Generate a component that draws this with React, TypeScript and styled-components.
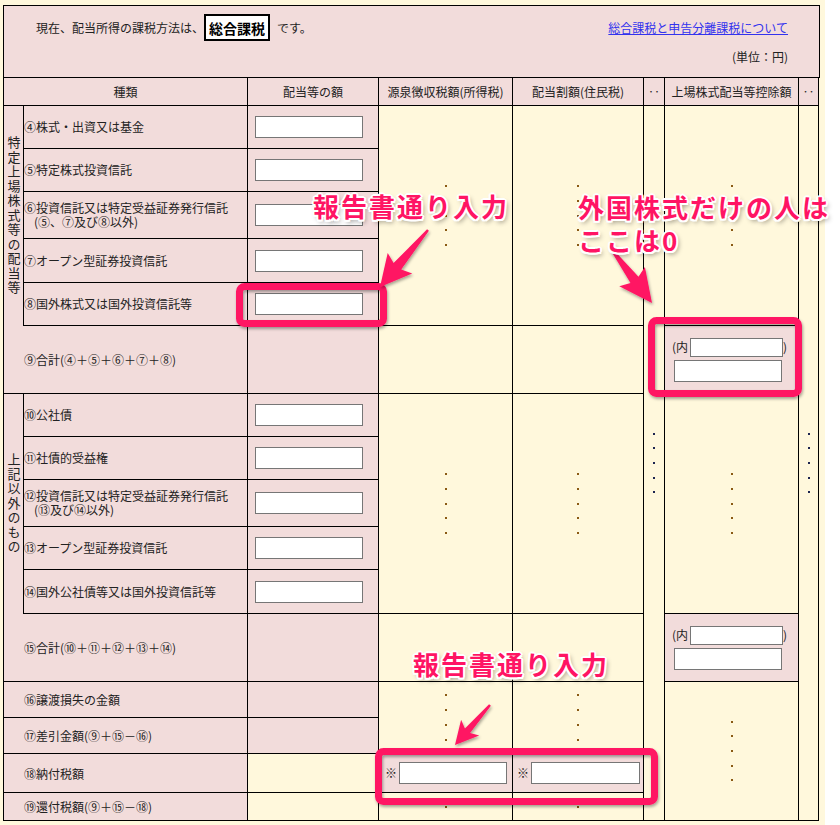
import React from "react";
import styled, { createGlobalStyle } from "styled-components";

const PINK = "#f2dcdb";
const CREAM = "#fff8dc";
const MARK = "#ff1464";

const GlobalStyle = createGlobalStyle`
  html, body {
    margin: 0;
    padding: 0;
    background: #fff;
  }
  body {
    font-family: "Noto Sans CJK JP", "Noto Sans", sans-serif;
  }
`;

const Page = styled.div`
  position: relative;
  width: 825px;
  height: 825px;
  box-sizing: border-box;
  padding: 5px 0 0 3px;
  background: ${CREAM};
  color: #222;
  font-size: 12px;
`;

const Form = styled.div`
  width: 816px;
  border-left: 1px solid #000;
  border-top: 1px solid #000;
`;

const TopSection = styled.div`
  box-sizing: border-box;
  height: 72px;
  display: flex;
  justify-content: space-between;
  padding: 8px 31px 0 32px;
  background: ${PINK};
  border-right: 1px solid #000;
  border-bottom: 1px solid #000;
`;

const Sentence = styled.div`
  display: flex;
  align-items: center;
  height: 27px;
  white-space: nowrap;
`;

const MethodBox = styled.span`
  display: inline-flex;
  align-items: center;
  box-sizing: border-box;
  height: 27px;
  padding: 0 3px;
  margin-right: 7px;
  border: 2px solid #000;
  background: #fff;
  color: #000;
  font-size: 14px;
  font-weight: bold;
`;

const Side = styled.div`
  display: flex;
  flex-direction: column;
  align-items: flex-end;
`;

const HelpLink = styled.a`
  line-height: 27px;
  color: #3333ee;
  text-decoration: underline;
`;

const Unit = styled.div`
  margin-top: 7px;
  line-height: 18px;
`;

const Grid = styled.div`
  display: grid;
  grid-template-columns: 20px 224px 131px 134px 131px 21px 134px 20px;
  grid-template-rows:
    28px 43px 43px 47px 44px 43px 68px 43px 43px 47px 43px 44px 68px
    36px 36px 39px 28px;
`;

type CellProps = {
  $col: number;
  $span?: number;
  $row: number;
  $rows?: number;
  $tone?: "pink" | "cream";
  $open?: boolean;
  $center?: boolean;
  $pad?: number;
};

const Cell = styled.div<CellProps>`
  grid-column: ${(p) => p.$col} / span ${(p) => p.$span ?? 1};
  grid-row: ${(p) => p.$row} / span ${(p) => p.$rows ?? 1};
  box-sizing: border-box;
  min-width: 0;
  display: flex;
  align-items: center;
  justify-content: ${(p) => (p.$center ? "center" : "flex-start")};
  padding-left: ${(p) => p.$pad ?? 0}px;
  border-right: 1px solid #000;
  border-bottom: ${(p) => (p.$open ? "none" : "1px solid #000")};
  background: ${(p) => (p.$tone === "cream" ? CREAM : PINK)};
  white-space: nowrap;
`;

const StackCell = styled(Cell)`
  flex-direction: column;
  align-items: flex-start;
  justify-content: center;
  gap: 3px;
`;

const Vertical = styled.span`
  writing-mode: vertical-rl;
  text-orientation: upright;
  font-size: 13px;
  line-height: 16px;
  letter-spacing: 1.5px;
`;

const Label = styled.div`
  line-height: 14px;
`;

const SubLine = styled.div`
  padding-left: 10px;
`;

const Field = styled.input<{ $w: number; $h?: number }>`
  box-sizing: border-box;
  width: ${(p) => p.$w}px;
  height: ${(p) => p.$h ?? 22}px;
  margin: 0;
  padding: 0 3px;
  border: 1px solid #767676;
  background: #fff;
  font-size: 12px;
  outline: none;
`;

const Inline = styled.div`
  display: flex;
  align-items: center;
  line-height: 14px;
`;

const Kome = styled.span`
  margin-right: 2px;
  font-size: 12px;
`;

const DotColumn = styled.div<{ $dark?: boolean }>`
  display: flex;
  flex-direction: column;
  gap: 12.7px;
  span {
    display: block;
    width: 2px;
    height: 2px;
    background: ${(p) => (p.$dark ? "#1c2450" : "#8a5a14")};
  }
`;

const Overlay = styled.svg`
  position: absolute;
  left: 0;
  top: 0;
  width: 840px;
  height: 825px;
  pointer-events: none;
  overflow: visible;
`;

const Callout = styled.div<{ $x: number; $y: number }>`
  position: absolute;
  left: ${(p) => p.$x}px;
  top: ${(p) => p.$y}px;
  color: ${MARK};
  font-family: "Noto Sans CJK JP", sans-serif;
  font-weight: bold;
  font-size: 26px;
  line-height: 33px;
  letter-spacing: 2px;
  white-space: nowrap;
  pointer-events: none;
  text-shadow: 2px 0 0 #fff, -2px 0 0 #fff, 0 2px 0 #fff, 0 -2px 0 #fff,
    1.5px 1.5px 0 #fff, -1.5px 1.5px 0 #fff, 1.5px -1.5px 0 #fff,
    -1.5px -1.5px 0 #fff, 2px 3px 5px rgba(0, 0, 0, 0.45);
`;

const Dots = ({ n, dark }: { n: number; dark?: boolean }) => (
  <DotColumn $dark={dark}>
    {Array.from({ length: n }).map((_, i) => (
      <span key={i} />
    ))}
  </DotColumn>
);

type Pt = [number, number];

// tapered arrow with a wide head, like the screenshot markup tools draw
const arrowPoints = (tail: Pt, tip: Pt, headLen: number, headHalf: number, shaft: number) => {
  const dx = tip[0] - tail[0];
  const dy = tip[1] - tail[1];
  const len = Math.hypot(dx, dy);
  const ux = dx / len;
  const uy = dy / len;
  const nx = -uy;
  const ny = ux;
  const bx = tip[0] - ux * headLen;
  const by = tip[1] - uy * headLen;
  const jx = bx + ux * 4;
  const jy = by + uy * 4;
  const pts: Pt[] = [
    [tail[0] + nx * 1.2, tail[1] + ny * 1.2],
    [jx + nx * shaft, jy + ny * shaft],
    [bx + nx * headHalf, by + ny * headHalf],
    tip,
    [bx - nx * headHalf, by - ny * headHalf],
    [jx - nx * shaft, jy - ny * shaft],
    [tail[0] - nx * 1.2, tail[1] - ny * 1.2],
  ];
  return pts.map((p) => `${p[0].toFixed(1)},${p[1].toFixed(1)}`).join(" ");
};

const topRows = [
  { no: 2, text: "④株式・出資又は基金" },
  { no: 3, text: "⑤特定株式投資信託" },
  { no: 4, text: "⑥投資信託又は特定受益証券発行信託", sub: "(⑤、⑦及び⑧以外)" },
  { no: 5, text: "⑦オープン型証券投資信託" },
  { no: 6, text: "⑧国外株式又は国外投資信託等" },
];

const otherRows = [
  { no: 8, text: "⑩公社債" },
  { no: 9, text: "⑪社債的受益権" },
  { no: 10, text: "⑫投資信託又は特定受益証券発行信託", sub: "(⑬及び⑭以外)" },
  { no: 11, text: "⑬オープン型証券投資信託" },
  { no: 12, text: "⑭国外公社債等又は国外投資信託等" },
];

const TaxForm = () => (
  <Form>
    <TopSection>
      <Sentence>
        現在、配当所得の課税方法は、<MethodBox>総合課税</MethodBox>です。
      </Sentence>
      <Side>
        <HelpLink href="#">総合課税と申告分離課税について</HelpLink>
        <Unit>(単位：円)</Unit>
      </Side>
    </TopSection>

    <Grid>
      <Cell $col={1} $span={2} $row={1} $center>種類</Cell>
      <Cell $col={3} $row={1} $center>配当等の額</Cell>
      <Cell $col={4} $row={1} $center>源泉徴収税額(所得税)</Cell>
      <Cell $col={5} $row={1} $center>配当割額(住民税)</Cell>
      <Cell $col={6} $row={1} $center>‥</Cell>
      <Cell $col={7} $row={1} $center>上場株式配当等控除額</Cell>
      <Cell $col={8} $row={1} $center>‥</Cell>

      <Cell $col={1} $row={2} $rows={5} $open $center>
        <Vertical>特定上場株式等の配当等</Vertical>
      </Cell>
      {topRows.map((r) => (
        <React.Fragment key={r.no}>
          <Cell $col={2} $row={r.no}>
            <Label>
              {r.text}
              {r.sub && <SubLine>{r.sub}</SubLine>}
            </Label>
          </Cell>
          <Cell $col={3} $row={r.no} $pad={7}>
            <Field $w={108} />
          </Cell>
        </React.Fragment>
      ))}
      <Cell $col={1} $span={2} $row={7} $pad={20}>
        ⑨合計(④＋⑤＋⑥＋⑦＋⑧)
      </Cell>
      <Cell $col={3} $row={7} />

      <Cell $col={1} $row={8} $rows={5} $open $center>
        <Vertical>上記以外のもの</Vertical>
      </Cell>
      {otherRows.map((r) => (
        <React.Fragment key={r.no}>
          <Cell $col={2} $row={r.no}>
            <Label>
              {r.text}
              {r.sub && <SubLine>{r.sub}</SubLine>}
            </Label>
          </Cell>
          <Cell $col={3} $row={r.no} $pad={7}>
            <Field $w={108} />
          </Cell>
        </React.Fragment>
      ))}
      <Cell $col={1} $span={2} $row={13} $pad={20}>
        ⑮合計(⑩＋⑪＋⑫＋⑬＋⑭)
      </Cell>
      <Cell $col={3} $row={13} />

      <Cell $col={1} $span={2} $row={14} $pad={20}>⑯譲渡損失の金額</Cell>
      <Cell $col={3} $row={14} />
      <Cell $col={1} $span={2} $row={15} $pad={20}>⑰差引金額(⑨＋⑮－⑯)</Cell>
      <Cell $col={3} $row={15} />
      <Cell $col={1} $span={2} $row={16} $pad={20}>⑱納付税額</Cell>
      <Cell $col={3} $row={16} $tone="cream" />
      <Cell $col={1} $span={2} $row={17} $pad={20}>⑲還付税額(⑨＋⑮－⑱)</Cell>
      <Cell $col={3} $row={17} $tone="cream" />

      {[4, 5].map((c) => (
        <React.Fragment key={c}>
          <Cell $col={c} $row={2} $rows={5} $tone="cream" $center>
            <Dots n={5} />
          </Cell>
          <Cell $col={c} $row={7} $tone="cream" />
          <Cell $col={c} $row={8} $rows={5} $tone="cream" $center>
            <Dots n={5} />
          </Cell>
          <Cell $col={c} $row={13} $tone="cream" />
          <Cell $col={c} $row={14} $rows={2} $tone="cream" $center>
            <Dots n={4} />
          </Cell>
          <Cell $col={c} $row={16} $pad={c === 4 ? 6 : 4}>
            <Inline>
              <Kome>※</Kome>
              <Field $w={c === 4 ? 108 : 109} />
            </Inline>
          </Cell>
          <Cell $col={c} $row={17} $tone="cream" $center>
            <Dots n={1} />
          </Cell>
        </React.Fragment>
      ))}

      <Cell $col={6} $row={2} $rows={16} $tone="cream" $center>
        <Dots n={5} dark />
      </Cell>

      <Cell $col={7} $row={2} $rows={5} $tone="cream" $center>
        <Dots n={5} />
      </Cell>
      <StackCell $col={7} $row={7} $pad={7}>
        <Inline>
          (内<Field $w={93} $h={19} style={{ marginLeft: 2 }} />)
        </Inline>
        <Field $w={108} style={{ marginLeft: 2 }} />
      </StackCell>
      <Cell $col={7} $row={8} $rows={5} $tone="cream" $center>
        <Dots n={5} />
      </Cell>
      <StackCell $col={7} $row={13} $pad={7}>
        <Inline>
          (内<Field $w={93} $h={19} style={{ marginLeft: 2 }} />)
        </Inline>
        <Field $w={108} style={{ marginLeft: 2 }} />
      </StackCell>
      <Cell $col={7} $row={14} $rows={4} $tone="cream" $center>
        <Dots n={5} />
      </Cell>

      <Cell $col={8} $row={2} $rows={16} $tone="cream" $center>
        <Dots n={5} dark />
      </Cell>
    </Grid>
  </Form>
);

const Markup = () => (
  <>
    <Overlay viewBox="0 0 840 825">
      <defs>
        <filter id="shade" x="-20%" y="-20%" width="140%" height="140%">
          <feDropShadow dx="1" dy="2" stdDeviation="1.6" floodColor="#000" floodOpacity="0.35" />
        </filter>
      </defs>
      <g fill="none" stroke={MARK} strokeWidth={7} filter="url(#shade)">
        <rect x={239.5} y={286.5} width={144} height={37} rx={5} />
        <rect x={651.5} y={320.5} width={147} height={73} rx={5} />
        <rect x={378.5} y={751.5} width={276} height={50} rx={5} />
      </g>
      <g fill={MARK} filter="url(#shade)">
        <polygon points={arrowPoints([428, 230], [380, 287], 31, 16, 5)} />
        <polygon points={arrowPoints([612, 250], [652, 303], 33, 16, 5)} />
        <polygon points={arrowPoints([490, 705], [455, 745], 23, 12, 3.5)} />
      </g>
    </Overlay>
    <Callout $x={313} $y={189}>報告書通り入力</Callout>
    <Callout $x={578} $y={190}>
      外国株式だけの人は
      <br />
      ここは0
    </Callout>
    <Callout $x={413} $y={647}>報告書通り入力</Callout>
  </>
);

export default function App() {
  return (
    <>
      <GlobalStyle />
      <Page>
        <TaxForm />
        <Markup />
      </Page>
    </>
  );
}
